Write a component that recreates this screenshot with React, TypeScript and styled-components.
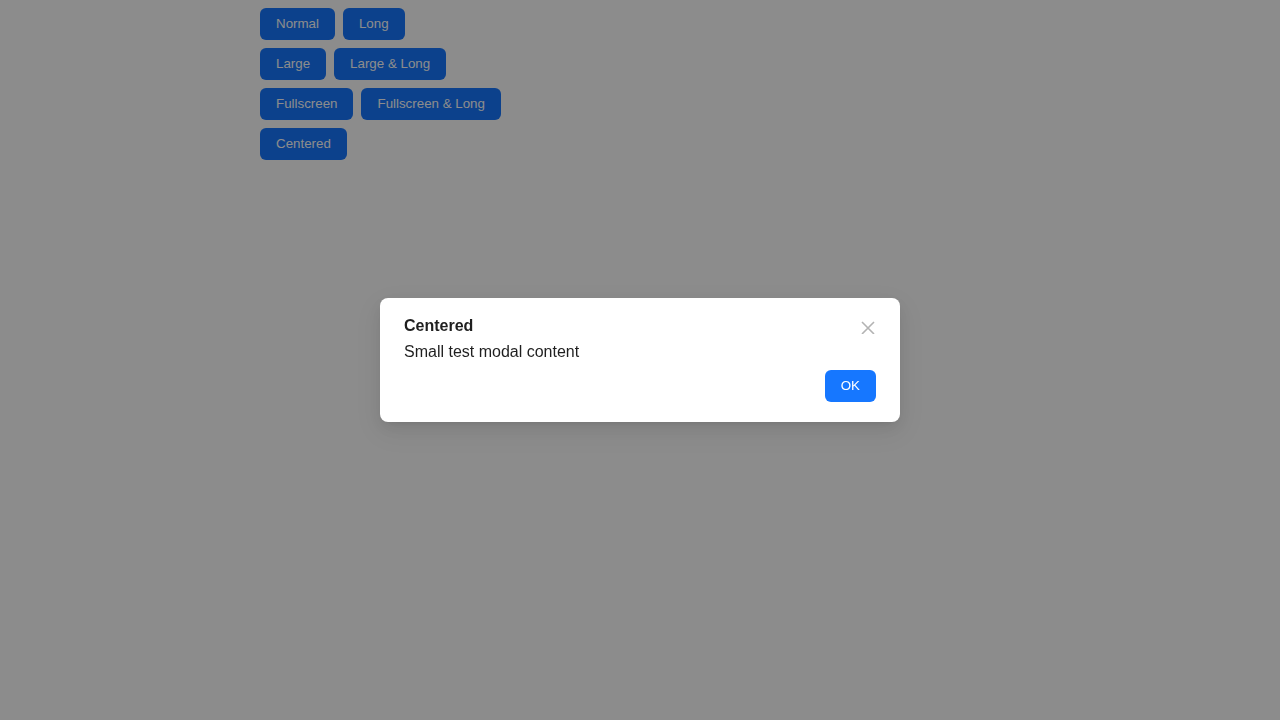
import React from "react";
import styled, { createGlobalStyle } from "styled-components";

const GlobalStyle = createGlobalStyle`
  body {
    margin: 8px;
    background: #ffffff;
    font-family: "Liberation Sans", Arial, sans-serif;
  }
`;

const Container = styled.div`
  width: 760px;
  margin: 0 auto;
  display: flex;
  flex-direction: column;
  gap: 8px;
`;

const Row = styled.div`
  display: flex;
  gap: 8px;
`;

const Button = styled.button`
  height: 32px;
  padding: 0 16px;
  border: none;
  border-radius: 6px;
  background: #1677ff;
  color: #ffffff;
  font-family: "Liberation Sans", Arial, sans-serif;
  font-size: 13.333px;
  line-height: 32px;
  cursor: pointer;
`;

const Overlay = styled.div`
  position: fixed;
  inset: 0;
  background: rgba(0, 0, 0, 0.45);
  display: flex;
  align-items: center;
  justify-content: center;
`;

const Dialog = styled.div`
  position: relative;
  width: 520px;
  box-sizing: border-box;
  padding: 17px 24px 20px;
  background: #ffffff;
  border-radius: 8px;
  box-shadow: 0 6px 16px 0 rgba(0, 0, 0, 0.08), 0 3px 6px -4px rgba(0, 0, 0, 0.12),
    0 9px 28px 8px rgba(0, 0, 0, 0.05);
  display: flex;
  flex-direction: column;
`;

const Title = styled.div`
  font-size: 16px;
  font-weight: 700;
  line-height: 22px;
  color: #1f1f1f;
`;

const Body = styled.div`
  margin-top: 4px;
  font-size: 16px;
  line-height: 22px;
  color: #1f1f1f;
`;

const Footer = styled.div`
  margin-top: 7px;
  display: flex;
  justify-content: flex-end;
`;

const Close = styled.button`
  position: absolute;
  top: 21px;
  right: 24px;
  width: 16px;
  height: 16px;
  padding: 0;
  border: none;
  background: transparent;
  display: flex;
  align-items: center;
  justify-content: center;
  cursor: pointer;
`;

export default function App() {
  return (
    <>
      <GlobalStyle />
      <Container>
        <Row>
          <Button>Normal</Button>
          <Button>Long</Button>
        </Row>
        <Row>
          <Button>Large</Button>
          <Button>Large &amp; Long</Button>
        </Row>
        <Row>
          <Button>Fullscreen</Button>
          <Button>Fullscreen &amp; Long</Button>
        </Row>
        <Row>
          <Button>Centered</Button>
        </Row>
      </Container>
      <Overlay>
        <Dialog>
          <Close aria-label="Close">
            <svg width="14" height="14" viewBox="0 0 14 14">
              <path d="M1 2 L13 14 M13 2 L1 14" stroke="#b3b3b3" strokeWidth="1.6" fill="none" />
            </svg>
          </Close>
          <Title>Centered</Title>
          <Body>Small test modal content</Body>
          <Footer>
            <Button>OK</Button>
          </Footer>
        </Dialog>
      </Overlay>
    </>
  );
}
